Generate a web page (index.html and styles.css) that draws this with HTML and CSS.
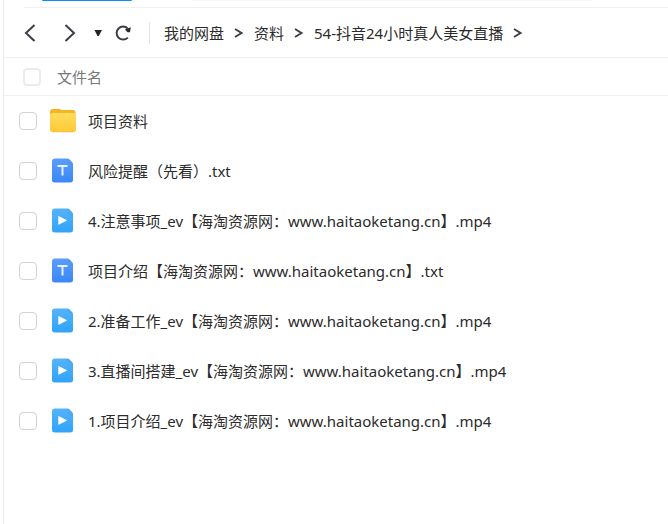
FILE: index.html
```
<!DOCTYPE html>
<html lang="zh-CN">
<head>
    <meta charset="UTF-8">
    <meta name="viewport" content="width=device-width, initial-scale=1.0">
    <title>我的网盘</title>
    <link rel="stylesheet" href="styles.css">
</head>
<body>

<!-- Shared icons -->
<svg class="icon-defs" aria-hidden="true">
    <defs>
        <linearGradient id="folderFill" x1="0" y1="0" x2="0" y2="1">
            <stop offset="0" stop-color="#ffdc5e"/>
            <stop offset="1" stop-color="#ffc935"/>
        </linearGradient>
        <linearGradient id="textFill" x1="0" y1="0" x2="0" y2="1">
            <stop offset="0" stop-color="#5a9dfb"/>
            <stop offset="1" stop-color="#3b87f8"/>
        </linearGradient>
        <linearGradient id="videoFill" x1="0" y1="0" x2="0" y2="1">
            <stop offset="0" stop-color="#55b3fb"/>
            <stop offset="1" stop-color="#2fa3fb"/>
        </linearGradient>
    </defs>
    <symbol id="folder" viewBox="0 0 26 26">
        <path d="M0 4q0-3 3-3h6q1.500 0 2.500 1h11.500q2.500 0 2.500 3v6H0z" fill="#f8b321"/>
        <rect x="0" y="5" width="26" height="19" rx="3" fill="url(#folderFill)"/>
        <path d="M1 22.500q.8 1.200 2 1.200h20q1.200 0 2-1.200" fill="none" stroke="#f6bd36" stroke-width="1"/>
    </symbol>
    <symbol id="text" viewBox="0 0 26 26">
        <path d="M5 .5h11.500l6.500 6.500V22q0 2.500-3 2.500H5q-3 0-3-2.500V3.500q0-3 3-3z" fill="url(#textFill)"/>
        <path d="M16.500.5h1q1 0 1.800.8L22 4q1 1 1 2.200v2l-4-2.700z" fill="#5297f2"/>
        <path d="M7.500 8h10M12.500 8v9.500" fill="none" stroke="#e6f0ff" stroke-width="2"/>
    </symbol>
    <symbol id="video" viewBox="0 0 26 26">
        <path d="M5 .5h11.500l6.500 6.500V22q0 2.500-3 2.500H5q-3 0-3-2.500V3.500q0-3 3-3z" fill="url(#videoFill)"/>
        <path d="M16.500.5h1q1 0 1.800.8L22 4q1 1 1 2.200v2l-4-2.700z" fill="#4aa9f2"/>
        <path d="M8.300 8.600v7.500q0 .8.800.4l7.400-3.700q.7-.5 0-.9L9.100 8.200q-.8-.4-.8.400z" fill="#fff"/>
    </symbol>
    <symbol id="crumbArrow" viewBox="0 0 10 12">
        <path d="M1 2l6.500 4L1 10" fill="none" stroke="#3d414b" stroke-width="2"/>
    </symbol>
</svg>

<main class="page">
    <div class="top-strip">
        <div class="strip-button"></div>
        <div class="strip-search"></div>
    </div>

    <nav class="toolbar">
        <button class="tool-button back" type="button" aria-label="后退">
            <svg width="12" height="20" viewBox="0 0 12 20"><path d="M10.500 2L2 10l8.500 8" fill="none" stroke="#3a3e49" stroke-width="2"/></svg>
        </button>
        <button class="tool-button forward" type="button" aria-label="前进">
            <svg width="12" height="20" viewBox="0 0 12 20"><path d="M1.500 2L10 10l-8.500 8" fill="none" stroke="#3a3e49" stroke-width="2"/></svg>
        </button>
        <button class="tool-button history" type="button" aria-label="历史">
            <svg width="8" height="8" viewBox="0 0 8 8"><path d="M.5 1h7.500L4.800 7H3.500z" fill="#20242e"/></svg>
        </button>
        <button class="tool-button refresh" type="button" aria-label="刷新">
            <svg width="18" height="18" viewBox="0 0 18 18">
                <path d="M13.800 13.600A6.500 6.500 0 1 1 13.800 4.600" fill="none" stroke="#3a3e49" stroke-width="2"/>
                <path d="M11 5.500L16.800 3.200l-.8 5h-2.500z" fill="#262a34"/>
            </svg>
        </button>
        <ol class="breadcrumb">
            <li><a href="#">我的网盘</a><svg class="crumb-arrow"><use href="#crumbArrow"/></svg></li>
            <li><a href="#">资料</a><svg class="crumb-arrow"><use href="#crumbArrow"/></svg></li>
            <li><a href="#">54-抖音24小时真人美女直播</a><svg class="crumb-arrow"><use href="#crumbArrow"/></svg></li>
        </ol>
    </nav>

    <table class="file-table">
        <thead>
            <tr>
                <th class="check-cell"><input type="checkbox" id="checkAll" aria-label="全选"></th>
                <th class="name-cell">文件名</th>
            </tr>
        </thead>
        <tbody>
            <tr>
                <td class="check-cell"><input type="checkbox" id="file1"></td>
                <td class="name-cell"><label for="file1"><svg class="file-icon"><use href="#folder"/></svg>项目资料</label></td>
            </tr>
            <tr>
                <td class="check-cell"><input type="checkbox" id="file2"></td>
                <td class="name-cell"><label for="file2"><svg class="file-icon"><use href="#text"/></svg>风险提醒（先看）.txt</label></td>
            </tr>
            <tr>
                <td class="check-cell"><input type="checkbox" id="file3"></td>
                <td class="name-cell"><label for="file3"><svg class="file-icon"><use href="#video"/></svg>4.注意事项_ev【海淘资源网：www.haitaoketang.cn】.mp4</label></td>
            </tr>
            <tr>
                <td class="check-cell"><input type="checkbox" id="file4"></td>
                <td class="name-cell"><label for="file4"><svg class="file-icon"><use href="#text"/></svg>项目介绍【海淘资源网：www.haitaoketang.cn】.txt</label></td>
            </tr>
            <tr>
                <td class="check-cell"><input type="checkbox" id="file5"></td>
                <td class="name-cell"><label for="file5"><svg class="file-icon"><use href="#video"/></svg>2.准备工作_ev【海淘资源网：www.haitaoketang.cn】.mp4</label></td>
            </tr>
            <tr>
                <td class="check-cell"><input type="checkbox" id="file6"></td>
                <td class="name-cell"><label for="file6"><svg class="file-icon"><use href="#video"/></svg>3.直播间搭建_ev【海淘资源网：www.haitaoketang.cn】.mp4</label></td>
            </tr>
            <tr>
                <td class="check-cell"><input type="checkbox" id="file7"></td>
                <td class="name-cell"><label for="file7"><svg class="file-icon"><use href="#video"/></svg>1.项目介绍_ev【海淘资源网：www.haitaoketang.cn】.mp4</label></td>
            </tr>
        </tbody>
    </table>
</main>

</body>
</html>
```
FILE: styles.css
```
* {
    box-sizing: border-box;
}

body {
    margin: 0;
    padding-left: 3px;
    background: #fff;
    color: #2b2b2b;
    font-family: "Noto Sans", "Noto Sans CJK SC", sans-serif;
    font-size: 15px;
    line-height: 20px;
}

.icon-defs {
    position: absolute;
    width: 0;
    height: 0;
}

.page {
    min-height: 100vh;
    border-left: 1px solid #ececee;
}

/* Bottom edge of the bar above the toolbar */
.top-strip {
    display: flex;
    gap: 60px;
    height: 8px;
    margin-left: 20px;
    padding-left: 18px;
    border-bottom: 1px solid #f0f0f2;
}

.strip-button {
    width: 90px;
    height: 1px;
    background: #0a8cff;
    border-radius: 0 0 4px 4px;
}

.strip-search {
    flex: 1;
    height: 1px;
    margin-right: 76px;
    background: #f3f8fa;
}

.toolbar {
    display: flex;
    align-items: center;
    height: 50px;
    padding-left: 20px;
    border-bottom: 1px solid #f0f0f2;
}

.tool-button {
    display: flex;
    padding: 0;
    background: none;
    border: none;
    cursor: pointer;
}

.forward {
    margin-left: 28px;
}

.history {
    margin-left: 18px;
}

.refresh {
    margin-left: 12px;
}

.breadcrumb {
    display: flex;
    align-items: center;
    height: 22px;
    margin: 0 0 0 17px;
    padding: 0 0 0 14px;
    border-left: 1px solid #e4e4e7;
    list-style: none;
}

.breadcrumb li {
    display: flex;
    align-items: center;
    white-space: nowrap;
}

.breadcrumb a {
    color: #2b2b2b;
    text-decoration: none;
}

.breadcrumb a:hover {
    color: #0a8cff;
}

.crumb-arrow {
    width: 10px;
    height: 12px;
    margin: 0 10px;
}

.file-table {
    width: 100%;
    border-collapse: separate;
    border-spacing: 0;
    table-layout: fixed;
}

.file-table th,
.file-table td {
    height: 50px;
    padding: 0;
    text-align: left;
    vertical-align: middle;
}

.file-table th {
    height: 38px;
    border-bottom: 1px solid #f0f0f2;
    color: #77777b;
    font-weight: normal;
}

.file-table .check-cell {
    width: 46px;
    padding-left: 15px;
}

.file-table th.check-cell {
    padding-left: 19px;
}

.file-table th.name-cell {
    padding-left: 7px;
}

.file-table input {
    display: block;
    appearance: none;
    width: 18px;
    height: 18px;
    margin: 0;
    background: #fff;
    border: 1px solid #cfd3d8;
    border-radius: 4px;
}

.file-table th input {
    border: 2px solid #ececec;
}

.file-table input:checked {
    background: #0a8cff;
}

.name-cell label {
    display: flex;
    align-items: center;
    gap: 12px;
    white-space: nowrap;
}

.file-icon {
    flex: none;
    width: 26px;
    height: 26px;
}
```
